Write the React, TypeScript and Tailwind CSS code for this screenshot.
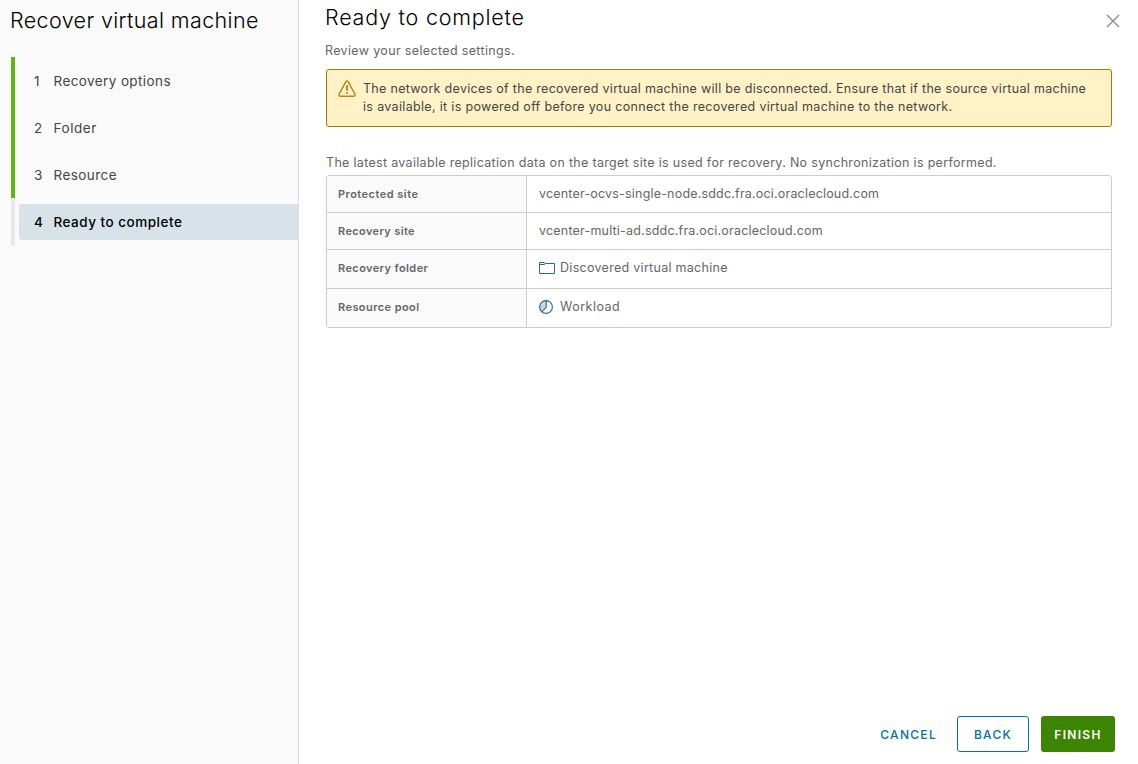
import React from 'react';

const steps = [
  { label: 'Recovery options', spacing: 'tracking-[0.4px]' },
  { label: 'Folder', spacing: 'tracking-[0.55px]' },
  { label: 'Resource', spacing: 'tracking-[0.43px]' },
];

function CloseIcon() {
  return (
    <svg width="14" height="14" viewBox="0 0 14 14" fill="none" stroke="#8c8c8c" strokeWidth="1.4">
      <path d="M1 1 L13 13 M13 1 L1 13" />
    </svg>
  );
}

function WarningIcon() {
  return (
    <svg width="18" height="18" viewBox="0 0 18 18" fill="none" stroke="#b58317" strokeLinejoin="round" strokeLinecap="round">
      <path d="M7.9 1.7 Q9 .2 10.1 1.7 L16.9 14.1 Q17.4 16 15.6 16.2 H2.4 Q.6 16 1.1 14.1 Z" strokeWidth="1.4" />
      <path d="M9 6 V10" strokeWidth="1.8" />
      <circle cx="9" cy="13" r="1.1" fill="#b58317" stroke="none" />
    </svg>
  );
}

function FolderIcon() {
  return (
    <svg width="16" height="12" viewBox="0 0 16 12" fill="none" stroke="#276a8a">
      <path d="M.5 11.5 V.5 H5 L6.5 1.5 H15.5 V11.5 Z M.5 2.5 H5.5 L6.5 1.5" />
    </svg>
  );
}

function PoolIcon() {
  return (
    <svg width="14" height="14" viewBox="0 0 14 14" fill="none" stroke="#276a8a">
      <path d="M7 .6 V7 L3 12 A6.4 6.4 0 0 1 7 .6 Z" fill="#c5d5dd" stroke="none" />
      <circle cx="7" cy="7" r="6.4" strokeWidth="1.1" />
      <path d="M7.3 .6 V7 L3 12" strokeWidth="1.1" />
    </svg>
  );
}

const rows = [
  { name: 'Protected site', nameSpacing: 'tracking-[0.48px]', value: 'vcenter-ocvs-single-node.sddc.fra.oci.oraclecloud.com', spacing: 'tracking-[0.19px]', height: 'h-9', icon: null },
  { name: 'Recovery site', nameSpacing: 'tracking-[0.37px]', value: 'vcenter-multi-ad.sddc.fra.oci.oraclecloud.com', spacing: 'tracking-[0.2px]', height: 'h-[37px] border-t', icon: null },
  { name: 'Recovery folder', nameSpacing: 'tracking-[0.4px]', value: 'Discovered virtual machine', spacing: 'tracking-[0.29px]', height: 'h-[39px] border-t', icon: <FolderIcon /> },
  { name: 'Resource pool', nameSpacing: 'tracking-[0.43px]', value: 'Workload', spacing: 'tracking-[0.5px]', height: 'h-[39px] border-t', icon: <PoolIcon /> },
];

export default function App() {
  return (
    <div className="flex h-[764px] w-[1138px] overflow-hidden bg-white font-['Inter','Liberation_Sans',sans-serif] text-[12.5px] text-[#666]">
      <aside className="h-full w-[299px] shrink-0 border-r border-[#dedede] bg-[#fafafa]">
        <h1 className="h-[57px] whitespace-nowrap pl-[10px] pt-[6px] text-[21.5px] font-light leading-7 text-black">
          <span className="tracking-[0.37px]">Recover virtual machine</span>
        </h1>
        <nav className="pl-[11px] text-[13.5px] text-[#454545]">
          {steps.map((step, i) => (
            <div key={step.label} className="flex h-[47px] items-center border-l-4 border-[#60b515] pl-[19px] pt-0.5">
              <span className="w-[19.5px]">{i + 1}</span>
              <span className={step.spacing}>{step.label}</span>
            </div>
          ))}
          <div className="flex h-12 border-l-4 border-[#e8e8e8] pl-1 pt-[6px]">
            <div className="flex h-9 flex-1 items-center rounded-l-[3px] bg-[#d8e3e9] pl-[15px] pt-px font-medium text-black">
              <span className="w-[19.5px]">4</span>
              <span className="tracking-[0.5px]">Ready to complete</span>
            </div>
          </div>
        </nav>
      </aside>
      <main className="flex min-w-0 flex-1 flex-col pl-[27px]">
        <header className="flex h-[41px] justify-between pr-[18px]">
          <h2 className="-ml-px pt-[3px] text-[21.5px] font-light leading-7 tracking-[0.78px] text-black">Ready to complete</h2>
          <button className="h-[14px] pt-[14px]" aria-label="Close"><CloseIcon /></button>
        </header>
        <p className="-ml-px h-7 pt-px leading-[18px]"><span className="tracking-[0.35px]">Review your selected settings.</span></p>
        <div className="flex h-[58px] w-[786px] rounded-[3px] border border-[#ad7600] bg-[#fff2c7] pl-[11px] pt-[10px] leading-[18px] text-[#454545]">
          <div className="w-[25px] shrink-0"><WarningIcon /></div>
          <div className="whitespace-nowrap">
            <p className="tracking-[0.3px]">The network devices of the recovered virtual machine will be disconnected. Ensure that if the source virtual machine</p>
            <p className="tracking-[0.33px]">is available, it is powered off before you connect the recovered virtual machine to the network.</p>
          </div>
        </div>
        <p className="h-[48px] pt-[27px] leading-[18px]"><span className="tracking-[0.31px]">The latest available replication data on the target site is used for recovery. No synchronization is performed.</span></p>
        <div className="w-[786px] overflow-hidden rounded-[3px] border border-[#ccc]">
          {rows.map((row) => (
            <div key={row.name} className={`flex border-[#ccc] ${row.height}`}>
              <div className="w-[200px] border-r border-[#ccc] bg-[#fafafa] pl-[11px] pt-[9px] text-[11px] font-semibold leading-[18px]">
                <span className={row.nameSpacing}>{row.name}</span>
              </div>
              <div className="flex flex-1 pl-3 pt-[9px] leading-[18px]">
                {row.icon && <span className="flex h-[18px] w-[21px] items-center">{row.icon}</span>}
                <span className={row.spacing}>{row.value}</span>
              </div>
            </div>
          ))}
        </div>
        <footer className="mt-auto flex h-12 items-start justify-end pr-[23px] text-[12px] font-medium tracking-[1.3px] text-[#0072a3]">
          <button className="mr-5 h-9 pt-px">CANCEL</button>
          <button className="mr-3 h-9 w-[72px] rounded-[3px] border border-[#0072a3] pt-px">BACK</button>
          <button className="h-9 w-[74px] rounded-[3px] bg-[#3c8500] pt-px font-semibold text-white">FINISH</button>
        </footer>
      </main>
    </div>
  );
}
